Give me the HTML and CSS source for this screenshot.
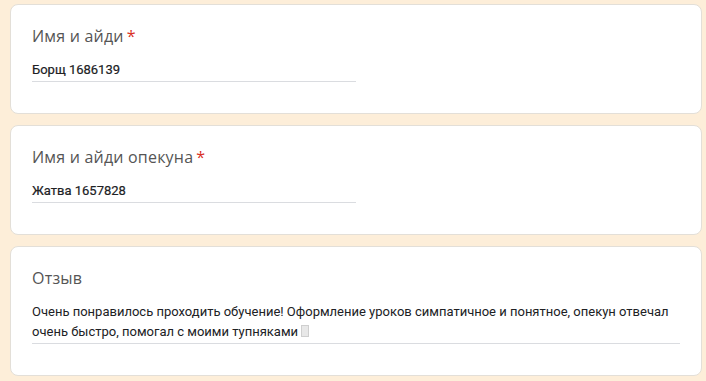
FILE: index.html
```html
<!DOCTYPE html>
<html lang="ru">
<head>
  <meta charset="UTF-8">
  <title>Анкета</title>
  <link rel="stylesheet" href="styles.css">
</head>
<body>
  <div class="form">

    <div class="card">
      <div class="label">Имя и айди<span class="req">*</span></div>
      <div class="field short">Борщ 1686139</div>
    </div>

    <div class="card">
      <div class="label">Имя и айди опекуна<span class="req">*</span></div>
      <div class="field short">Жатва 1657828</div>
    </div>

    <div class="card">
      <div class="label">Отзыв</div>
      <div class="field long">Очень понравилось проходить обучение! Оформление уроков симпатичное и понятное, опекун отвечал<br>очень быстро, помогал с моими тупняками <span class="nochar"></span></div>
    </div>

  </div>
</body>
</html>
```

FILE: styles.css
```css
body {
  margin: 0;
  padding: 0;
  background-color: #fdeed9;
  font-family: Roboto, "Liberation Sans", sans-serif;
  color: #202124;
}

.form {
  padding: 4px 4px 0 10px;
}

.card {
  background-color: #fff;
  border: 1px solid #e3dfd8;
  border-radius: 8px;
  padding: 19px 21px 31px;
  margin-bottom: 11px;
}

.label {
  font-family: "Open Sans", "DejaVu Sans", sans-serif;
  font-size: 16px;
  letter-spacing: 0.2px;
  line-height: 24px;
  color: #555;
  margin-bottom: 12px;
}

.req {
  color: #d93025;
  margin-left: 3px;
}

.field {
  font-size: 13px;
  line-height: 20px;
  border-bottom: 1px solid #dadce0;
  padding-bottom: 1px;
}

.field.short {
  width: 324px;
  -webkit-text-stroke: 0.2px #202124;
}

.field.long {
  width: 100%;
}

.nochar {
  display: inline-block;
  width: 6px;
  height: 10px;
  border: 1px solid #cfcfcf;
  background-color: #e8e8e8;
  vertical-align: -1px;
}
```
